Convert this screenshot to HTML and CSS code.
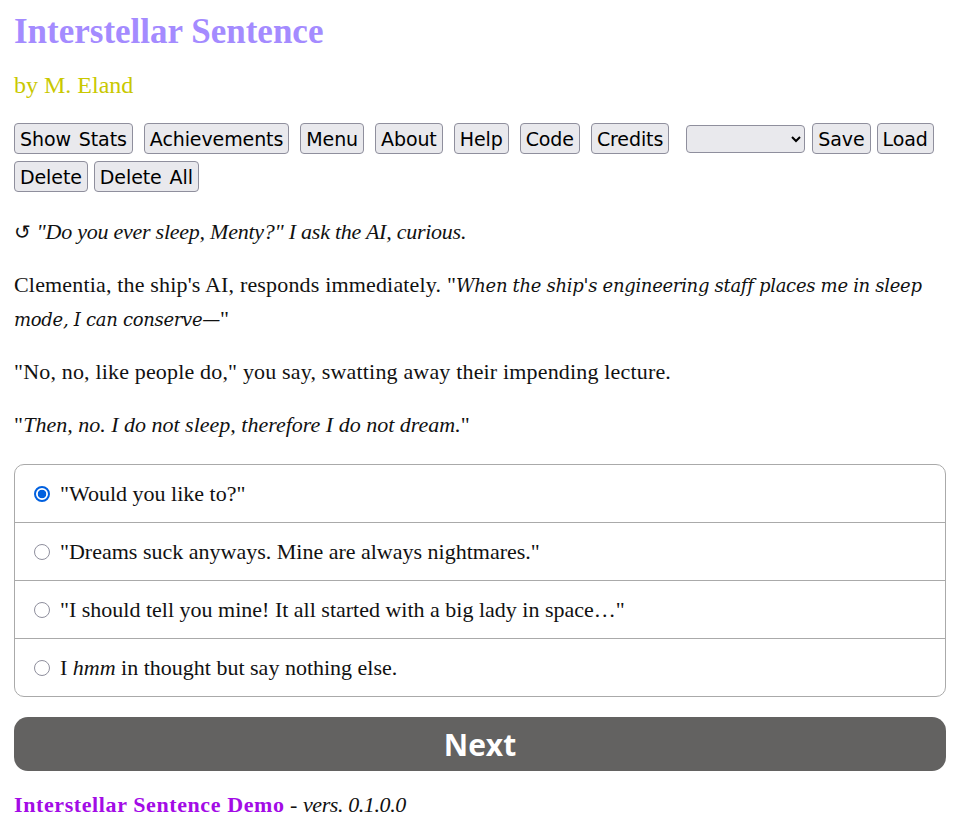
FILE: index.html
```html
<!DOCTYPE html>
<html lang="en">
<head>
<meta charset="utf-8">
<title>Interstellar Sentence</title>
<link rel="stylesheet" href="styles.css">
</head>
<body>
<main class="page">
  <h1 class="title">Interstellar Sentence</h1>
  <p class="byline">by M. Eland</p>
  <nav class="menu">
    <button class="btn btn-main">Show Stats</button>
    <button class="btn btn-main">Achievements</button>
    <button class="btn btn-main">Menu</button>
    <button class="btn btn-main">About</button>
    <button class="btn btn-main">Help</button>
    <button class="btn btn-main">Code</button>
    <button class="btn btn-main btn-last">Credits</button>
    <select class="slot"><option></option></select>
    <button class="btn btn-save">Save</button>
    <button class="btn btn-save">Load</button>
    <button class="btn btn-save">Delete</button>
    <button class="btn">Delete All</button>
  </nav>
  <section class="story">
    <p><span class="restart">↺</span> <em class="narrow">"Do you ever sleep, Menty?" I ask the AI, curious.</em></p>
    <p>Clementia, the ship's AI, responds immediately. "<em class="ai">When the ship's engineering staff places me in sleep mode, I can conserve—</em>"</p>
    <p>"No, no, like people do," you say, swatting away their impending lecture.</p>
    <p>"<em>Then, no. I do not sleep, therefore I do not dream.</em>"</p>
  </section>
  <form class="choices">
    <label class="choice"><input type="radio" name="c" class="radio" checked> <span>"Would you like to?"</span></label>
    <label class="choice"><input type="radio" name="c" class="radio"> <span>"Dreams suck anyways. Mine are always nightmares."</span></label>
    <label class="choice"><input type="radio" name="c" class="radio"> <span>"I should tell you mine! It all started with a big lady in space…"</span></label>
    <label class="choice"><input type="radio" name="c" class="radio"> <span>I <em>hmm</em> in thought but say nothing else.</span></label>
  </form>
  <button class="next">Next</button>
  <footer class="footer"><strong class="game">Interstellar Sentence Demo</strong> - <em class="version">vers. 0.1.0.0</em></footer>
</main>
</body>
</html>
```
FILE: styles.css
```css
html, body {
  margin: 0;
  background: #fff;
}
body {
  font-family: "Liberation Serif", "Times New Roman", serif;
  color: #111;
}
.page {
  width: 932px;
  padding: 12px 14px 0 14px;
}
.title {
  margin: 0;
  font-size: 35px;
  line-height: 40px;
  font-weight: bold;
  color: #a48bff;
}
.byline {
  margin: 18px 0 0 0;
  font-size: 24px;
  line-height: 30px;
  color: #c9c800;
}
.menu {
  margin-top: 23px;
  display: flex;
  flex-wrap: wrap;
  align-items: center;
  row-gap: 7px;
}
.btn {
  font-family: "DejaVu Sans", Tahoma, sans-serif;
  font-size: 19px;
  height: 31px;
  padding: 0 5px;
  border: 1px solid #8f8f9d;
  border-radius: 4px;
  background: #e9e9ed;
  color: #000;
  letter-spacing: -0.1px;
  word-spacing: 2px;
}
.btn-main { margin-right: 11px; }
.btn-last { margin-right: 17px; }
.btn-save { margin-right: 6px; }
.slot {
  width: 119px;
  height: 28px;
  margin-right: 7px;
  border: 1px solid #8f8f9d;
  border-radius: 4px;
  background: #e9e9ed;
  font-size: 16px;
}
.story {
  margin-top: 23px;
}
.story p {
  margin: 0 0 19px 0;
  font-size: 22px;
  line-height: 34px;
  letter-spacing: 0.17px;
}
.restart {
  font-family: "DejaVu Sans", sans-serif;
  font-size: 20px;
  line-height: 1;
}
.story p em {
  letter-spacing: 0;
}
.story p .narrow {
  letter-spacing: -0.25px;
}
.story p .ai {
  font-family: "DejaVu Serif", Georgia, serif;
  font-size: 18px;
  line-height: 1;
  letter-spacing: -0.3px;
}
.choices {
  margin-top: 22px;
  border: 1px solid #aaa;
  border-radius: 10px;
  display: flex;
  flex-direction: column;
}
.choice {
  display: flex;
  align-items: center;
  height: 57px;
  padding-left: 18px;
  font-size: 22px;
  border-top: 1px solid #aaa;
}
.choice:first-child { border-top: none; }
.radio {
  appearance: none;
  width: 16px;
  height: 16px;
  margin: 0 10px 0 1px;
  border: 1px solid #8f8f9d;
  border-radius: 50%;
  background: #fff;
}
.radio:checked {
  border: 2px solid #0060df;
  background: radial-gradient(circle, #0060df 0 4px, #fff 4.6px);
}
.next {
  display: block;
  width: 100%;
  height: 54px;
  margin-top: 20px;
  border: none;
  border-radius: 14px;
  background: #636261;
  color: #fff;
  font-family: "Open Sans", sans-serif;
  font-weight: bold;
  font-size: 30px;
}
.footer {
  margin-top: 19px;
  font-size: 22px;
  line-height: 30px;
}
.game {
  color: #a30be6;
  letter-spacing: 0.6px;
}
.version {
  letter-spacing: -0.4px;
}
```
